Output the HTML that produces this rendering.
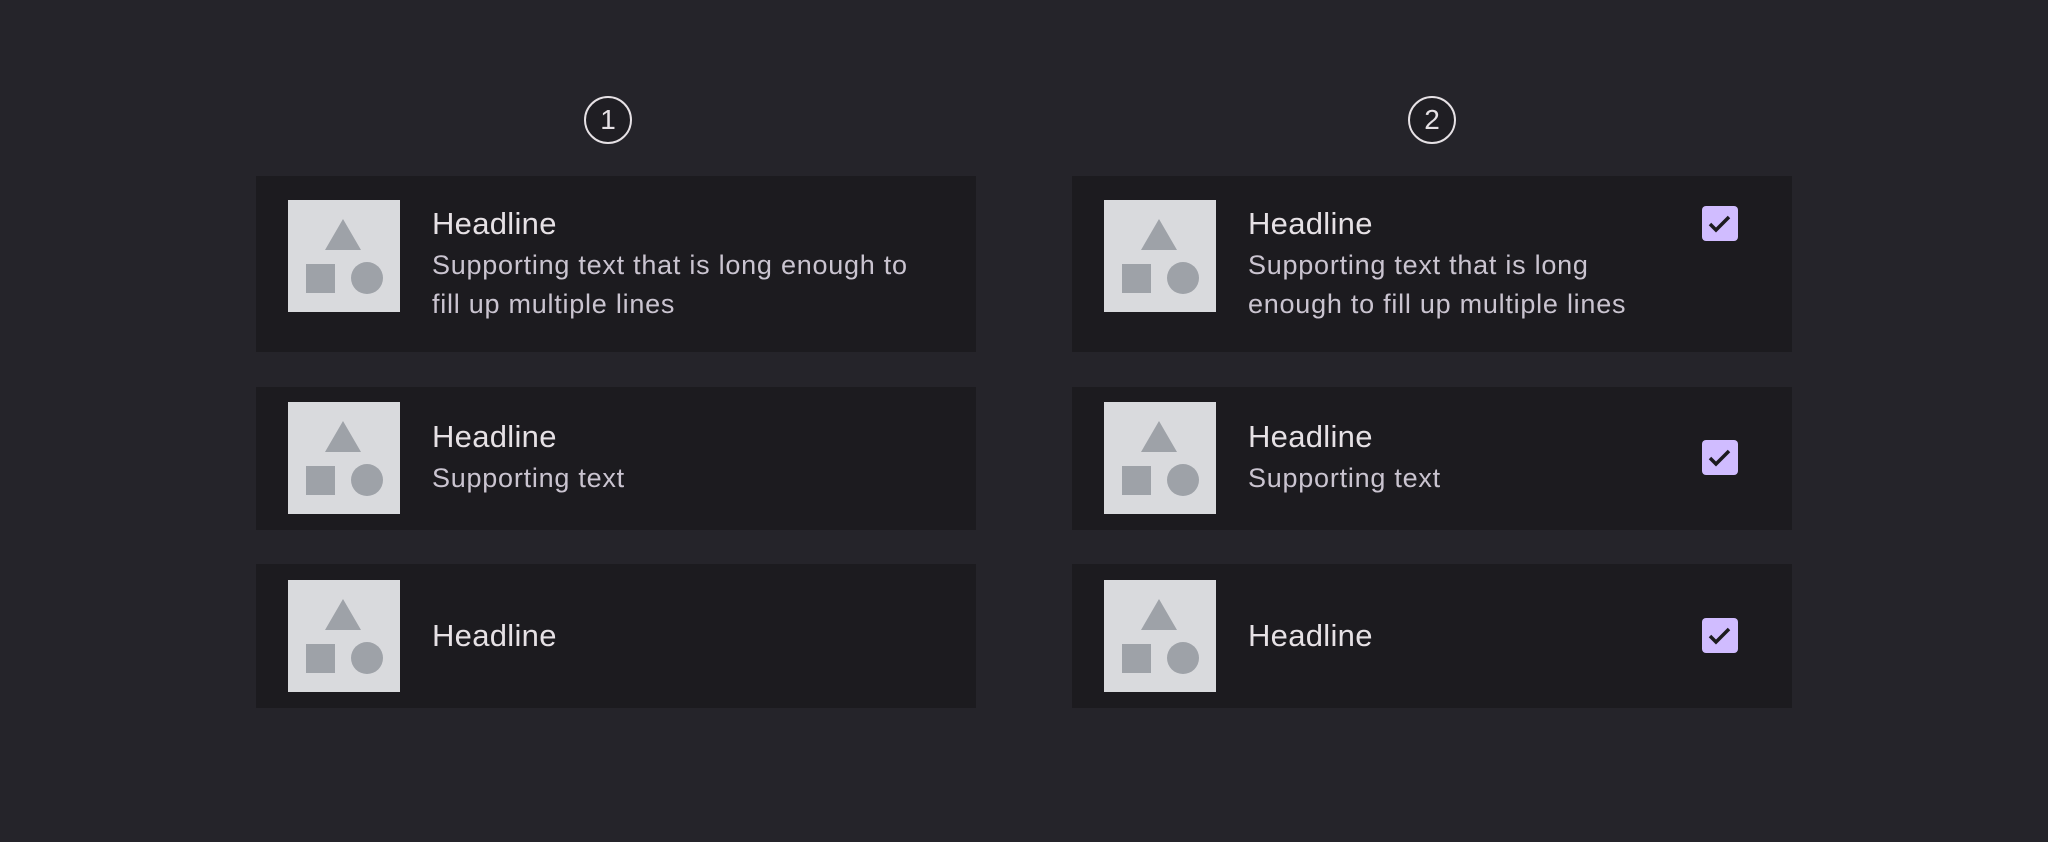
<!DOCTYPE html>
<html><head><meta charset="utf-8"><style>
html,body{margin:0;padding:0}
body{width:2048px;height:842px;background:#25242a;position:relative;overflow:hidden;font-family:"Liberation Sans",Roboto,sans-serif}
.num{position:absolute;width:44px;height:44px;border:2.5px solid #e6e1e5;border-radius:50%;background:#1f1e23;color:#e6e1e5;font-size:28px;line-height:44px;text-align:center;top:96px}
.card{position:absolute;background:#1c1b1f;width:720px}
.img{position:absolute;left:32px;width:112px;height:112px}
.h{position:absolute;left:176px;font-size:31px;line-height:46px;color:#e6e1e5;white-space:nowrap;letter-spacing:0.3px}
.s{position:absolute;left:176px;font-size:27px;line-height:39px;color:#cac4d0;letter-spacing:0.75px;white-space:nowrap}
.cb{position:absolute;left:630px;width:36px;height:35px;background:#d0bcff;border-radius:4px}
</style></head><body>
<div class="num" style="left:584px">1</div>
<div class="num" style="left:1408px">2</div>

<!-- column 1 -->
<div class="card" style="left:256px;top:176px;height:176px">
<svg class="img" style="top:24px" viewBox="0 0 112 112"><rect width="112" height="112" fill="#d9dadd"/><path d="M55 19L73 50H37Z" fill="#9ea2a8"/><rect x="18" y="64" width="29" height="29" fill="#9ea2a8"/><circle cx="79" cy="78" r="16" fill="#9ea2a8"/></svg>
<div class="h" style="top:25px">Headline</div>
<div class="s" style="top:70px">Supporting text that is long enough to<br>fill up multiple lines</div>
</div>
<div class="card" style="left:256px;top:387px;height:143px">
<svg class="img" style="top:15px" viewBox="0 0 112 112"><rect width="112" height="112" fill="#d9dadd"/><path d="M55 19L73 50H37Z" fill="#9ea2a8"/><rect x="18" y="64" width="29" height="29" fill="#9ea2a8"/><circle cx="79" cy="78" r="16" fill="#9ea2a8"/></svg>
<div class="h" style="top:27px">Headline</div>
<div class="s" style="top:72px">Supporting text</div>
</div>
<div class="card" style="left:256px;top:564px;height:144px">
<svg class="img" style="top:16px" viewBox="0 0 112 112"><rect width="112" height="112" fill="#d9dadd"/><path d="M55 19L73 50H37Z" fill="#9ea2a8"/><rect x="18" y="64" width="29" height="29" fill="#9ea2a8"/><circle cx="79" cy="78" r="16" fill="#9ea2a8"/></svg>
<div class="h" style="top:49px">Headline</div>
</div>

<!-- column 2 -->
<div class="card" style="left:1072px;top:176px;height:176px">
<svg class="img" style="top:24px" viewBox="0 0 112 112"><rect width="112" height="112" fill="#d9dadd"/><path d="M55 19L73 50H37Z" fill="#9ea2a8"/><rect x="18" y="64" width="29" height="29" fill="#9ea2a8"/><circle cx="79" cy="78" r="16" fill="#9ea2a8"/></svg>
<div class="h" style="top:25px">Headline</div>
<div class="s" style="top:70px">Supporting text that is long<br>enough to fill up multiple lines</div>
<svg class="cb" style="top:30px" viewBox="0 0 36 35"><path d="M8 18l6 6L27 11" fill="none" stroke="#1c1b1f" stroke-width="3.5"/></svg>
</div>
<div class="card" style="left:1072px;top:387px;height:143px">
<svg class="img" style="top:15px" viewBox="0 0 112 112"><rect width="112" height="112" fill="#d9dadd"/><path d="M55 19L73 50H37Z" fill="#9ea2a8"/><rect x="18" y="64" width="29" height="29" fill="#9ea2a8"/><circle cx="79" cy="78" r="16" fill="#9ea2a8"/></svg>
<div class="h" style="top:27px">Headline</div>
<div class="s" style="top:72px">Supporting text</div>
<svg class="cb" style="top:53px" viewBox="0 0 36 35"><path d="M8 18l6 6L27 11" fill="none" stroke="#1c1b1f" stroke-width="3.5"/></svg>
</div>
<div class="card" style="left:1072px;top:564px;height:144px">
<svg class="img" style="top:16px" viewBox="0 0 112 112"><rect width="112" height="112" fill="#d9dadd"/><path d="M55 19L73 50H37Z" fill="#9ea2a8"/><rect x="18" y="64" width="29" height="29" fill="#9ea2a8"/><circle cx="79" cy="78" r="16" fill="#9ea2a8"/></svg>
<div class="h" style="top:49px">Headline</div>
<svg class="cb" style="top:54px" viewBox="0 0 36 35"><path d="M8 18l6 6L27 11" fill="none" stroke="#1c1b1f" stroke-width="3.5"/></svg>
</div>
</body></html>
